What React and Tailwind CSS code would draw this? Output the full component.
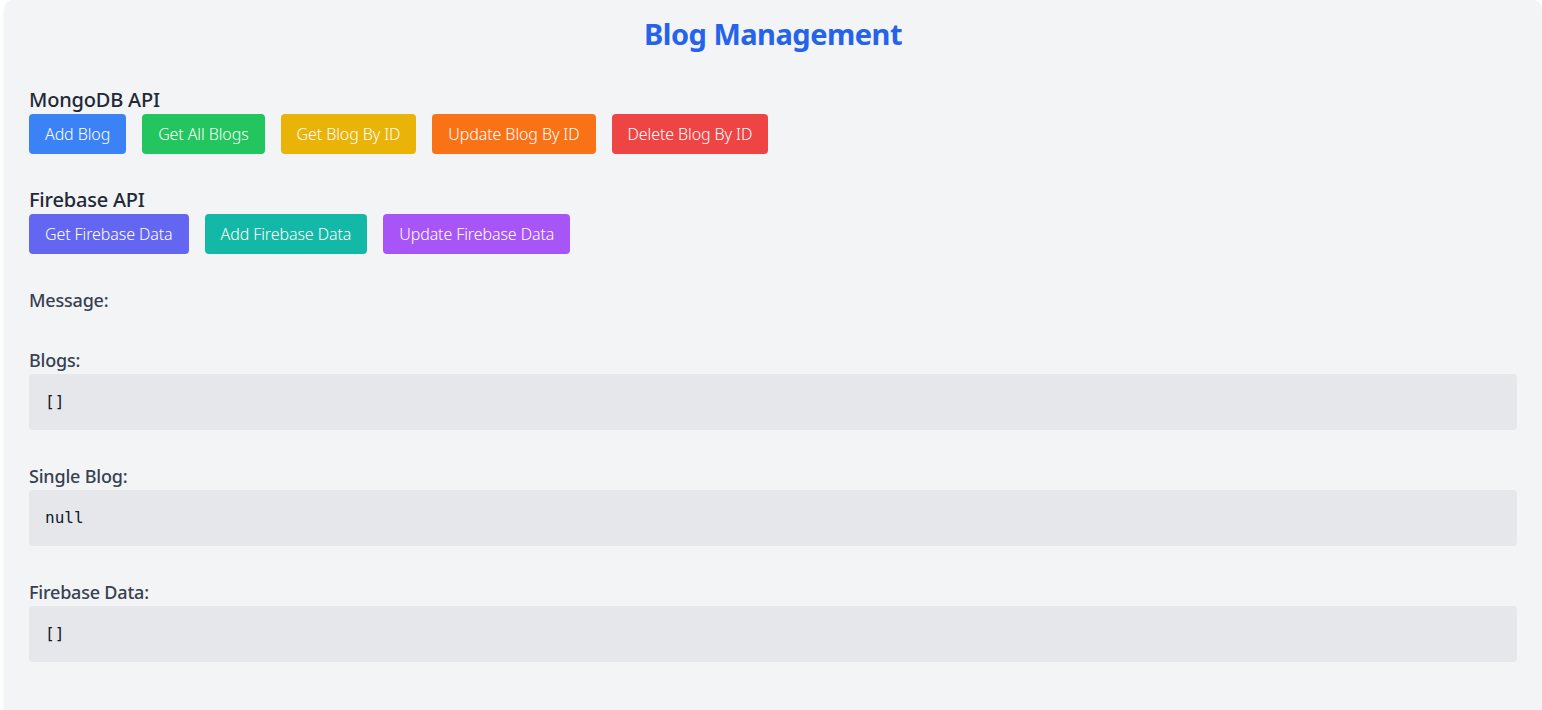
import { useState } from 'react'

const mongoButtons = [
  { label: 'Add Blog', color: 'bg-[#3b82f6]' },
  { label: 'Get All Blogs', color: 'bg-[#22c55e]' },
  { label: 'Get Blog By ID', color: 'bg-[#eab308]' },
  { label: 'Update Blog By ID', color: 'bg-[#f97316]' },
  { label: 'Delete Blog By ID', color: 'bg-[#ef4444]' },
]

const firebaseButtons = [
  { label: 'Get Firebase Data', color: 'bg-[#6366f1]' },
  { label: 'Add Firebase Data', color: 'bg-[#14b8a6]' },
  { label: 'Update Firebase Data', color: 'bg-[#a855f7]' },
]

function ButtonRow({ title, buttons }) {
  return (
    <div className="mb-8">
      <h2 className="text-xl font-medium text-[#1f2937] tracking-[-0.2px]">{title}</h2>
      <div className="flex gap-4">
        {buttons.map((item, index) => (
          <button key={index} className={`${item.color} text-white font-light px-4 py-2 rounded tracking-[-0.1px]`}>
            {item.label}
          </button>
        ))}
      </div>
    </div>
  )
}

function DataBlock({ label, value }) {
  return (
    <div className="mb-8">
      <h3 className="text-lg font-medium text-[#374151] tracking-[-0.2px]">{label}</h3>
      <pre className="bg-[#e5e7eb] p-4 rounded text-[#111827] font-['DejaVu_Sans_Mono',monospace]">{value}</pre>
    </div>
  )
}

export default function App() {
  const [message] = useState('')
  const [blogs] = useState([])
  const [blog] = useState(null)
  const [firebaseData] = useState([])

  return (
    <div className="min-h-screen bg-white pl-[5px] font-['Noto_Sans',sans-serif]">
      <div className="w-[1536px] bg-[#f3f4f6] shadow-md rounded-lg px-6 pt-4 pb-6">
        <h1 className="text-[29px] leading-9 font-bold text-[#2563eb] text-center tracking-[-0.5px] mb-[34px]">Blog Management</h1>

        <ButtonRow title="MongoDB API" buttons={mongoButtons} />
        <ButtonRow title="Firebase API" buttons={firebaseButtons} />

        <div className="mb-8">
          <h3 className="text-lg font-medium text-[#374151] tracking-[-0.2px]">Message:</h3>
          <p className="text-[#374151]">{message}</p>
        </div>

        <DataBlock label="Blogs:" value={JSON.stringify(blogs, null, 2)} />
        <DataBlock label="Single Blog:" value={JSON.stringify(blog, null, 2)} />
        <DataBlock label="Firebase Data:" value={JSON.stringify(firebaseData, null, 2)} />
      </div>
    </div>
  )
}
